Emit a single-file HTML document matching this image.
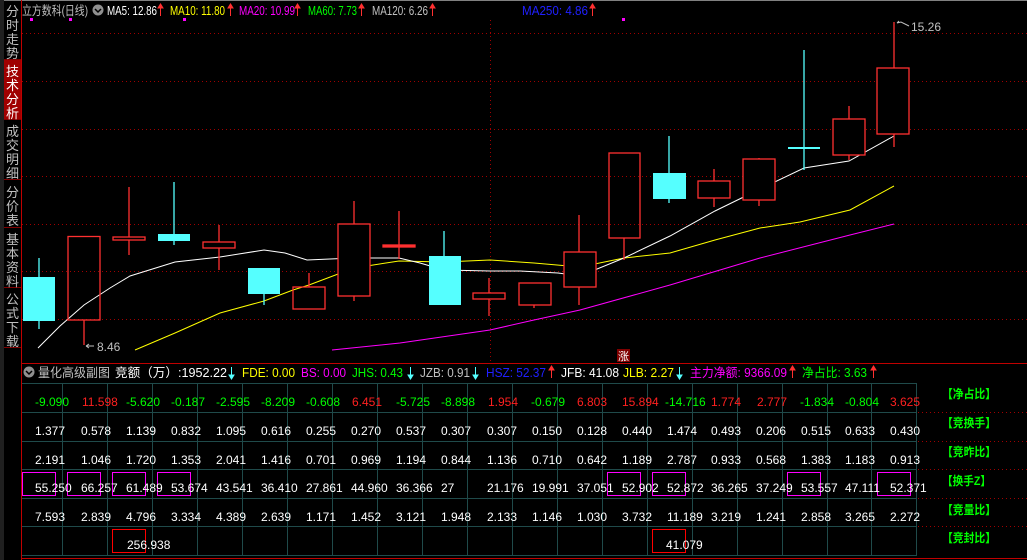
<!DOCTYPE html>
<html><head><meta charset="utf-8"><style>
html,body{margin:0;padding:0;background:#000;width:1027px;height:560px;overflow:hidden}
svg{display:block}
text{font-family:"Liberation Sans","Noto Sans CJK SC",sans-serif}
</style></head><body>
<svg width="1027" height="560" viewBox="0 0 1027 560" xmlns="http://www.w3.org/2000/svg">
<rect width="1027" height="560" fill="#000"/>
<line x1="0" y1="0.5" x2="1027" y2="0.5" stroke="#808080"/>
<rect x="0" y="0" width="4" height="560" fill="#202020"/>
<g fill="#c0c0c0" font-size="13">
<rect x="4" y="60" width="17" height="59" fill="#a00000"/>
<g stroke="#800000"><line x1="4" y1="59.5" x2="21" y2="59.5"/><line x1="4" y1="119.5" x2="21" y2="119.5"/><line x1="4" y1="179.5" x2="21" y2="179.5"/><line x1="4" y1="227.5" x2="21" y2="227.5"/><line x1="4" y1="287.5" x2="21" y2="287.5"/><line x1="4" y1="347.5" x2="21" y2="347.5"/></g>
<text x="6" y="16">分</text><text x="6" y="30">时</text><text x="6" y="44">走</text><text x="6" y="58">势</text>
<g fill="#fff"><text x="6" y="76">技</text><text x="6" y="90">术</text><text x="6" y="104">分</text><text x="6" y="118">析</text></g>
<text x="6" y="136">成</text><text x="6" y="150">交</text><text x="6" y="164">明</text><text x="6" y="178">细</text>
<text x="6" y="197">分</text><text x="6" y="211">价</text><text x="6" y="225">表</text>
<text x="6" y="244">基</text><text x="6" y="258">本</text><text x="6" y="272">资</text><text x="6" y="286">料</text>
<text x="6" y="304">公</text><text x="6" y="318">式</text><text x="6" y="332">下</text><text x="6" y="346">载</text>
</g>
<line x1="21.5" y1="0" x2="21.5" y2="560" stroke="#c00000"/>
<g stroke="#a00000" stroke-dasharray="1,3">
<line x1="22" y1="33.5" x2="1027" y2="33.5"/><line x1="22" y1="81.5" x2="1027" y2="81.5"/><line x1="22" y1="129.5" x2="1027" y2="129.5"/><line x1="22" y1="176.5" x2="1027" y2="176.5"/><line x1="22" y1="224.5" x2="1027" y2="224.5"/><line x1="22" y1="271.5" x2="1027" y2="271.5"/><line x1="22" y1="319.5" x2="1027" y2="319.5"/>
<line x1="490.5" y1="20" x2="490.5" y2="362"/>
</g>
<g font-size="12.5">
<text x="22" y="15" fill="#c0c0c0" textLength="66" lengthAdjust="spacingAndGlyphs">立方数科(日线)</text>
<circle cx="98" cy="10" r="5.5" fill="#909090"/><path d="M95 9 L98 12 L101 9" stroke="#000" stroke-width="1.5" fill="none"/>
<text x="107" y="15" fill="#fff" textLength="50" lengthAdjust="spacingAndGlyphs">MA5: 12.86</text>
<text x="170" y="15" fill="#ffff00" textLength="55" lengthAdjust="spacingAndGlyphs">MA10: 11.80</text>
<text x="239" y="15" fill="#ff00ff" textLength="56" lengthAdjust="spacingAndGlyphs">MA20: 10.99</text>
<text x="308" y="15" fill="#00ff00" textLength="49" lengthAdjust="spacingAndGlyphs">MA60: 7.73</text>
<text x="372" y="15" fill="#c0c0c0" textLength="56" lengthAdjust="spacingAndGlyphs">MA120: 6.26</text>
<text x="522" y="15" fill="#2020ff" textLength="66" lengthAdjust="spacingAndGlyphs">MA250: 4.86</text>
</g>
<g stroke="#ff3030" stroke-width="1" fill="#ff3030">
<line x1="160.5" y1="6" x2="160.5" y2="16"/><path d="M158 8 L160.5 4 L163 8Z"/>
<line x1="230.5" y1="6" x2="230.5" y2="16"/><path d="M228 8 L230.5 4 L233 8Z"/>
<line x1="297.5" y1="6" x2="297.5" y2="16"/><path d="M295 8 L297.5 4 L300 8Z"/>
<line x1="361.5" y1="6" x2="361.5" y2="16"/><path d="M359 8 L361.5 4 L364 8Z"/>
<line x1="432.5" y1="6" x2="432.5" y2="16"/><path d="M430 8 L432.5 4 L435 8Z"/>
<line x1="592.5" y1="6" x2="592.5" y2="16"/><path d="M590 8 L592.5 4 L595 8Z"/>
</g>
<g fill="#ff00ff"><rect x="30" y="18" width="3" height="3"/><rect x="69" y="18" width="3" height="3"/><rect x="183" y="18" width="3" height="3"/><rect x="622" y="18" width="3" height="3"/></g>
<polyline fill="none" stroke="#ff00ff" stroke-width="1" points="332,350 400,343 490,330 534,320 580,310 670,285 760,258 850,235 894,224"/>
<polyline fill="none" stroke="#ffff00" stroke-width="1" points="135,350 175,333 220,313 264,301 293,290 309,285 354,268 399,261 444,262 490,260 534,263 580,267 624,258 670,253 715,240 760,228 800,222 850,210 894,186"/>
<polyline fill="none" stroke="#ffffff" stroke-width="1" points="38,348 60,326 84,305 110,288 130,276 175,262 220,257 264,250 285,253 307,260 330,259 354,258 399,258 420,263 444,270 490,271 520,271 558,273 580,276 624,258 670,236 715,211 760,189 804,168 849,161 894,136"/>
<g stroke="#ff3030" stroke-width="1.3" fill="none">
<line x1="84" y1="320" x2="84" y2="345"/><rect x="68" y="236.5" width="32" height="83.5"/>
<line x1="129" y1="187" x2="129" y2="255"/><rect x="113" y="237" width="32" height="3" fill="#000"/>
<line x1="219" y1="225" x2="219" y2="270"/><rect x="203" y="242" width="32" height="6" fill="#000"/>
<line x1="309" y1="273" x2="309" y2="287"/><rect x="293" y="287" width="32" height="22"/>
<line x1="354" y1="201" x2="354" y2="301"/><rect x="338" y="224" width="32" height="72" fill="#000"/>
<line x1="399" y1="211" x2="399" y2="259"/><rect x="383" y="245" width="32" height="2" fill="#ff3030"/>
<line x1="489" y1="278" x2="489" y2="316"/><rect x="473" y="293" width="32" height="6" fill="#000"/>
<line x1="534" y1="305" x2="534" y2="308"/><rect x="519" y="283" width="32" height="22"/>
<line x1="579" y1="215" x2="579" y2="305"/><rect x="564" y="252" width="32" height="35" fill="#000"/>
<line x1="624" y1="238" x2="624" y2="260"/><rect x="609" y="153" width="31" height="85"/>
<line x1="714" y1="169" x2="714" y2="207"/><rect x="698" y="181" width="32" height="17" fill="#000"/>
<line x1="759" y1="158" x2="759" y2="206"/><rect x="743" y="159" width="32" height="41" fill="#000"/>
<line x1="849" y1="106" x2="849" y2="160"/><rect x="833" y="119" width="32" height="36" fill="#000"/>
<line x1="894" y1="22" x2="894" y2="147"/><rect x="877" y="68" width="32" height="66" fill="#000"/>
</g>
<g stroke="#55ffff" stroke-width="1.3" fill="#55ffff">
<line x1="39" y1="258" x2="39" y2="329"/><rect x="23" y="277" width="32" height="44" stroke="none"/>
<line x1="174" y1="182" x2="174" y2="245"/><rect x="158" y="234" width="32" height="7" stroke="none"/>
<line x1="264" y1="268" x2="264" y2="305"/><rect x="248" y="268" width="32" height="26" stroke="none"/>
<line x1="444" y1="231" x2="444" y2="305"/><rect x="429" y="256" width="32" height="49" stroke="none"/>
<line x1="669" y1="136" x2="669" y2="203"/><rect x="653" y="173" width="33" height="26" stroke="none"/>
<line x1="804" y1="50" x2="804" y2="170"/><rect x="788" y="147" width="32" height="2" stroke="none"/>
</g>
<g fill="#c0c0c0" font-size="12">
<text x="97" y="351">8.46</text><path d="M86 346 L94 346 M86 346 L89 344 M86 346 L89 348" stroke="#c0c0c0" fill="none"/>
<text x="911" y="31">15.26</text><path d="M897 23 L901 22 L909 26 M897 23 L899 21" stroke="#c0c0c0" fill="none"/>
</g>
<rect x="617" y="349" width="13" height="13" fill="#800000"/>
<text x="618" y="360" fill="#fff" font-size="11">涨</text>
<line x1="21" y1="363.5" x2="1027" y2="363.5" stroke="#c00000"/>
<circle cx="29" cy="372" r="5.5" fill="#909090"/><path d="M26 371 L29 374 L32 371" stroke="#000" stroke-width="1.5" fill="none"/>
<g font-size="12.5">
<text x="38" y="377" fill="#c0c0c0" textLength="72" lengthAdjust="spacingAndGlyphs">量化高级副图</text>
<text x="115" y="377" fill="#fff" textLength="112" lengthAdjust="spacingAndGlyphs">竞额（万）:1952.22</text>
<text x="242" y="377" fill="#ffff00" textLength="53" lengthAdjust="spacingAndGlyphs">FDE: 0.00</text>
<text x="301" y="377" fill="#ff00ff" textLength="45" lengthAdjust="spacingAndGlyphs">BS: 0.00</text>
<text x="352" y="377" fill="#00ff00" textLength="51" lengthAdjust="spacingAndGlyphs">JHS: 0.43</text>
<text x="420" y="377" fill="#c0c0c0" textLength="50" lengthAdjust="spacingAndGlyphs">JZB: 0.91</text>
<text x="486" y="377" fill="#2020ff" textLength="60" lengthAdjust="spacingAndGlyphs">HSZ: 52.37</text>
<text x="561" y="377" fill="#fff" textLength="58" lengthAdjust="spacingAndGlyphs">JFB: 41.08</text>
<text x="623" y="377" fill="#ffff00" textLength="51" lengthAdjust="spacingAndGlyphs">JLB: 2.27</text>
<text x="690" y="377" fill="#ff00ff" textLength="97" lengthAdjust="spacingAndGlyphs">主力净额: 9366.09</text>
<text x="802" y="377" fill="#00ff00" textLength="65" lengthAdjust="spacingAndGlyphs">净占比: 3.63</text>
</g>
<g stroke="#55ffff" fill="#55ffff">
<line x1="231.5" y1="367" x2="231.5" y2="377"/><path d="M229 375 L231.5 379 L234 375Z"/>
<line x1="410.5" y1="367" x2="410.5" y2="377"/><path d="M408 375 L410.5 379 L413 375Z"/>
<line x1="475.5" y1="367" x2="475.5" y2="377"/><path d="M473 375 L475.5 379 L478 375Z"/>
<line x1="679.5" y1="367" x2="679.5" y2="377"/><path d="M677 375 L679.5 379 L682 375Z"/>
</g>
<g stroke="#ff3030" fill="#ff3030">
<line x1="551.5" y1="368" x2="551.5" y2="378"/><path d="M549 370 L551.5 366 L554 370Z"/>
<line x1="792.5" y1="368" x2="792.5" y2="378"/><path d="M790 370 L792.5 366 L795 370Z"/>
<line x1="873.5" y1="368" x2="873.5" y2="378"/><path d="M871 370 L873.5 366 L876 370Z"/>
</g>
<g stroke="#1f4a4a" stroke-width="1">
<line x1="22" y1="383.5" x2="917" y2="383.5"/><line x1="22" y1="412.5" x2="917" y2="412.5"/><line x1="22" y1="441.5" x2="917" y2="441.5"/><line x1="22" y1="469.5" x2="917" y2="469.5"/><line x1="22" y1="498.5" x2="917" y2="498.5"/><line x1="22" y1="526.5" x2="917" y2="526.5"/><line x1="22" y1="555.5" x2="917" y2="555.5"/>
<line x1="62.5" y1="383" x2="62.5" y2="556"/><line x1="107.5" y1="383" x2="107.5" y2="556"/><line x1="152.5" y1="383" x2="152.5" y2="556"/><line x1="197.5" y1="383" x2="197.5" y2="556"/><line x1="242.5" y1="383" x2="242.5" y2="556"/><line x1="287.5" y1="383" x2="287.5" y2="556"/><line x1="332.5" y1="383" x2="332.5" y2="556"/><line x1="377.5" y1="383" x2="377.5" y2="556"/><line x1="422.5" y1="383" x2="422.5" y2="556"/><line x1="467.5" y1="383" x2="467.5" y2="556"/><line x1="512.5" y1="383" x2="512.5" y2="556"/><line x1="557.5" y1="383" x2="557.5" y2="556"/><line x1="602.5" y1="383" x2="602.5" y2="556"/><line x1="647.5" y1="383" x2="647.5" y2="556"/><line x1="692.5" y1="383" x2="692.5" y2="556"/><line x1="737.5" y1="383" x2="737.5" y2="556"/><line x1="782.5" y1="383" x2="782.5" y2="556"/><line x1="827.5" y1="383" x2="827.5" y2="556"/><line x1="871.5" y1="383" x2="871.5" y2="556"/><line x1="916.5" y1="383" x2="916.5" y2="556"/>
</g>
<line x1="21" y1="558.5" x2="1027" y2="558.5" stroke="#c00000"/>
<g stroke="#a00000" stroke-dasharray="1,3">
<line x1="918" y1="412.5" x2="1027" y2="412.5"/><line x1="918" y1="441.5" x2="1027" y2="441.5"/><line x1="918" y1="469.5" x2="1027" y2="469.5"/><line x1="918" y1="498.5" x2="1027" y2="498.5"/><line x1="918" y1="526.5" x2="1027" y2="526.5"/>
</g>
<g fill="none" stroke="#ff00ff" stroke-width="1">
<rect x="22.5" y="472.5" width="33" height="23"/><rect x="67.5" y="472.5" width="33" height="23"/><rect x="112.5" y="472.5" width="33" height="23"/><rect x="157.5" y="472.5" width="33" height="23"/><rect x="607.5" y="472.5" width="33" height="23"/><rect x="652.5" y="472.5" width="33" height="23"/><rect x="787.5" y="472.5" width="33" height="23"/><rect x="877.5" y="472.5" width="33" height="23"/>
</g>
<g fill="none" stroke="#ff0000" stroke-width="1">
<rect x="112.5" y="529.5" width="33" height="23"/><rect x="652.5" y="529.5" width="33" height="23"/>
</g>
<g font-size="12">
<g fill="#00ff00">
<text x="35" y="406">-9.090</text><text x="126" y="406">-5.620</text><text x="171" y="406">-0.187</text><text x="216" y="406">-2.595</text><text x="261" y="406">-8.209</text><text x="306" y="406">-0.608</text><text x="396" y="406">-5.725</text><text x="441" y="406">-8.898</text><text x="531" y="406">-0.679</text><text x="665" y="406">-14.716</text><text x="800" y="406">-1.834</text><text x="845" y="406">-0.804</text>
</g>
<g fill="#ff2020">
<text x="82" y="406">11.598</text><text x="352" y="406">6.451</text><text x="488" y="406">1.954</text><text x="577" y="406">6.803</text><text x="622" y="406">15.894</text><text x="711" y="406">1.774</text><text x="757" y="406">2.777</text><text x="890" y="406">3.625</text>
</g>
<g fill="#fff">
<text x="35" y="435">1.377</text><text x="81" y="435">0.578</text><text x="126" y="435">1.139</text><text x="171" y="435">0.832</text><text x="216" y="435">1.095</text><text x="261" y="435">0.616</text><text x="306" y="435">0.255</text><text x="351" y="435">0.270</text><text x="396" y="435">0.537</text><text x="441" y="435">0.307</text><text x="487" y="435">0.307</text><text x="532" y="435">0.150</text><text x="577" y="435">0.128</text><text x="622" y="435">0.440</text><text x="667" y="435">1.474</text><text x="711" y="435">0.493</text><text x="756" y="435">0.206</text><text x="801" y="435">0.515</text><text x="845" y="435">0.633</text><text x="890" y="435">0.430</text>
<text x="35" y="464">2.191</text><text x="81" y="464">1.046</text><text x="126" y="464">1.720</text><text x="171" y="464">1.353</text><text x="216" y="464">2.041</text><text x="261" y="464">1.416</text><text x="306" y="464">0.701</text><text x="351" y="464">0.969</text><text x="396" y="464">1.194</text><text x="441" y="464">0.844</text><text x="487" y="464">1.136</text><text x="532" y="464">0.710</text><text x="577" y="464">0.642</text><text x="622" y="464">1.189</text><text x="667" y="464">2.787</text><text x="711" y="464">0.933</text><text x="756" y="464">0.568</text><text x="801" y="464">1.383</text><text x="845" y="464">1.183</text><text x="890" y="464">0.913</text>
<text x="35" y="492">55.250</text><text x="81" y="492">66.257</text><text x="126" y="492">61.489</text><text x="171" y="492">53.674</text><text x="216" y="492">43.541</text><text x="261" y="492">36.410</text><text x="306" y="492">27.861</text><text x="351" y="492">44.960</text><text x="396" y="492">36.366</text><text x="441" y="492">27</text><text x="487" y="492">21.176</text><text x="532" y="492">19.991</text><text x="577" y="492">37.051</text><text x="622" y="492">52.902</text><text x="667" y="492">52.872</text><text x="711" y="492">36.265</text><text x="756" y="492">37.249</text><text x="801" y="492">53.557</text><text x="845" y="492">47.111</text><text x="890" y="492">52.371</text>
<text x="35" y="521">7.593</text><text x="81" y="521">2.839</text><text x="126" y="521">4.796</text><text x="171" y="521">3.334</text><text x="216" y="521">4.389</text><text x="261" y="521">2.639</text><text x="306" y="521">1.171</text><text x="351" y="521">1.452</text><text x="396" y="521">3.121</text><text x="441" y="521">1.948</text><text x="487" y="521">2.133</text><text x="532" y="521">1.146</text><text x="577" y="521">1.030</text><text x="622" y="521">3.732</text><text x="667" y="521">11.189</text><text x="711" y="521">3.219</text><text x="756" y="521">1.241</text><text x="801" y="521">2.858</text><text x="845" y="521">3.265</text><text x="890" y="521">2.272</text>
<text x="127" y="549">256.938</text><text x="666" y="549">41.079</text>
</g>
</g>
<g fill="#00ff00" font-size="12" font-weight="bold">
<text x="942" y="398" textLength="54" lengthAdjust="spacingAndGlyphs">【净占比】</text>
<text x="942" y="427" textLength="54" lengthAdjust="spacingAndGlyphs">【竞换手】</text>
<text x="942" y="456" textLength="54" lengthAdjust="spacingAndGlyphs">【竞昨比】</text>
<text x="942" y="485" textLength="49" lengthAdjust="spacingAndGlyphs">【换手Z】</text>
<text x="942" y="514" textLength="54" lengthAdjust="spacingAndGlyphs">【竞量比】</text>
<text x="942" y="542" textLength="54" lengthAdjust="spacingAndGlyphs">【竞封比】</text>
</g>
</svg>
</body></html>
